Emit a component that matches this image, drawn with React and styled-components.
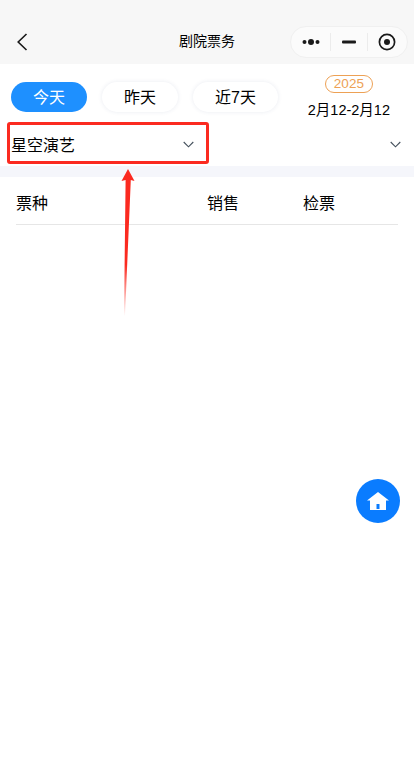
import styled, { createGlobalStyle } from "styled-components";

const GlobalStyle = createGlobalStyle`
  html, body {
    margin: 0;
    padding: 0;
    background: #fff;
  }
  body {
    font-family: "Liberation Sans", "Noto Sans CJK SC", sans-serif;
  }
`
const Page = styled.div`
  position: relative;
  width: 414px;
  height: 780px;
  overflow: hidden;
  background: #fff;
  color: #000;
`
const NavBar = styled.div`
  height: 64px;
  box-sizing: border-box;
  padding: 26px 6px 6px 16px;
  display: flex;
  align-items: center;
  justify-content: space-between;
  background: #f7f7f7;
`
const BackIcon = styled.svg`
  width: 12px;
  height: 18px;
  fill: none;
  stroke: #1a1a1a;
  stroke-width: 1.6;
`
const Title = styled.div`
  position: absolute;
  left: 0;
  right: 0;
  top: 32px;
  text-align: center;
  font-size: 14px;
  line-height: 18px;
`
const Capsule = styled.div`
  width: 118px;
  height: 32px;
  box-sizing: border-box;
  padding: 0 2px;
  display: flex;
  align-items: center;
  border: 1px solid #f0f0f0;
  border-radius: 16px;
  background: #fbfbfb;
`
const CapsuleCell = styled.div`
  flex: 1;
  height: 18px;
  display: flex;
  align-items: center;
  justify-content: center;
  &:not(:last-child) {
    border-right: 1px solid #ececec;
  }
`
const FilterTop = styled.div`
  height: 58px;
  padding: 0 24px 0 11px;
  display: flex;
  align-items: flex-start;
  justify-content: space-between;
`
const Pills = styled.div`
  display: flex;
  gap: 15px;
  padding-top: 18px;
`
const Pill = styled.div`
  width: ${(p) => p.$w || 76}px;
  height: 30px;
  line-height: 31px;
  text-align: center;
  font-size: 16px;
  border-radius: 15px;
  color: ${(p) => (p.$active ? "#fff" : "#000")};
  background: ${(p) => (p.$active ? "#1e90ff" : "#fff")};
  box-shadow: ${(p) => (p.$active ? "none" : "0 0 4px rgba(40, 60, 120, 0.1)")};
`
const DateCol = styled.div`
  display: flex;
  flex-direction: column;
  align-items: center;
  padding-top: 11px;
`
const YearTag = styled.div`
  width: 48px;
  height: 18px;
  box-sizing: border-box;
  line-height: 16px;
  text-align: center;
  font-size: 13.5px;
  color: #eda155;
  border: 1px solid #eda155;
  border-radius: 9px;
`
const DateText = styled.div`
  margin-top: 7px;
  font-size: 14.5px;
  line-height: 20px;
  white-space: nowrap;
`
const SelectRow = styled.div`
  height: 44px;
  display: flex;
`
const Select = styled.div`
  width: 50%;
  box-sizing: border-box;
  padding: 0 13px 0 11px;
  display: flex;
  align-items: center;
  justify-content: space-between;
  font-size: 16px;
  &:last-child {
    justify-content: flex-end;
  }
`
const Chevron = styled.svg`
  width: 11px;
  height: 7px;
  fill: none;
  stroke: #44505c;
  stroke-width: 1.1;
`
const Band = styled.div`
  height: 11px;
  background: #f5f6fb;
`
const TableHead = styled.div`
  margin: 0 16px;
  height: 48px;
  padding-top: 3px;
  box-sizing: border-box;
  display: grid;
  grid-template-columns: 191px 96px 1fr;
  align-items: center;
  font-size: 16px;
  border-bottom: 1px solid #e6e6e6;
`
const HomeButton = styled.div`
  position: absolute;
  left: 356px;
  top: 479px;
  width: 44px;
  height: 44px;
  border-radius: 50%;
  background: #0a7cff;
  display: flex;
  align-items: center;
  justify-content: center;
`
const Callout = styled.div`
  position: absolute;
  left: 7px;
  top: 122px;
  width: 202px;
  height: 42px;
  box-sizing: border-box;
  border: 3px solid #fb2a20;
  border-radius: 3px;
`
const Arrow = styled.svg`
  position: absolute;
  left: 116px;
  top: 168px;
  width: 24px;
  height: 150px;
`

function Chev() {
  return (
    <Chevron viewBox="0 0 11 7">
      <path d="M0.7 1 L5.5 5.8 L10.3 1" />
    </Chevron>
  );
}

function App() {
  return (
    <Page>
      <GlobalStyle />
      <NavBar>
        <BackIcon viewBox="0 0 12 18">
          <path d="M10.5 1 L2.2 9 L10.5 17" />
        </BackIcon>
        <Title>剧院票务</Title>
        <Capsule>
          <CapsuleCell>
            <svg width="18" height="8" viewBox="0 0 18 8">
              <circle cx="2.5" cy="4" r="2" fill="#1a1a1a" />
              <circle cx="9" cy="4" r="3" fill="#1a1a1a" />
              <circle cx="15.5" cy="4" r="2" fill="#1a1a1a" />
            </svg>
          </CapsuleCell>
          <CapsuleCell>
            <svg width="14" height="4" viewBox="0 0 14 4">
              <rect width="14" height="3" y="0.5" rx="1" fill="#1a1a1a" />
            </svg>
          </CapsuleCell>
          <CapsuleCell>
            <svg width="18" height="18" viewBox="0 0 18 18">
              <circle cx="9" cy="9" r="7.6" fill="none" stroke="#1a1a1a" strokeWidth="1.7" />
              <circle cx="9" cy="9" r="3" fill="#1a1a1a" />
            </svg>
          </CapsuleCell>
        </Capsule>
      </NavBar>
      <FilterTop>
        <Pills>
          <Pill $active>今天</Pill>
          <Pill>昨天</Pill>
          <Pill $w={85}>近7天</Pill>
        </Pills>
        <DateCol>
          <YearTag>2025</YearTag>
          <DateText>2月12-2月12</DateText>
        </DateCol>
      </FilterTop>
      <SelectRow>
        <Select>
          星空演艺
          <Chev />
        </Select>
        <Select>
          <Chev />
        </Select>
      </SelectRow>
      <Band />
      <TableHead>
        <span>票种</span>
        <span>销售</span>
        <span>检票</span>
      </TableHead>
      <HomeButton>
        <svg width="22" height="18" viewBox="0 0 22 18">
          <path
            fill="#fff"
            fillRule="evenodd"
            d="M11 0 L22 8.6 L19 8.6 L19 18 L3 18 L3 8.6 L0 8.6 Z M9.5 12 L9.5 17 L12.5 17 L12.5 12 Z"
          />
        </svg>
      </HomeButton>
      <Callout />
      <Arrow viewBox="0 0 24 150">
        <defs>
          <linearGradient id="arrowFade" x1="0" y1="0" x2="0" y2="1">
            <stop offset="0" stopColor="#fb2a20" />
            <stop offset="0.65" stopColor="#fb2a20" />
            <stop offset="1" stopColor="#fb2a20" stopOpacity="0" />
          </linearGradient>
        </defs>
        <path d="M12 1 L18.5 13 L14.8 12 L9 148 L8 148 L9.6 12 L5.5 13 Z" fill="url(#arrowFade)" />
      </Arrow>
    </Page>
  );
}

export default App;
